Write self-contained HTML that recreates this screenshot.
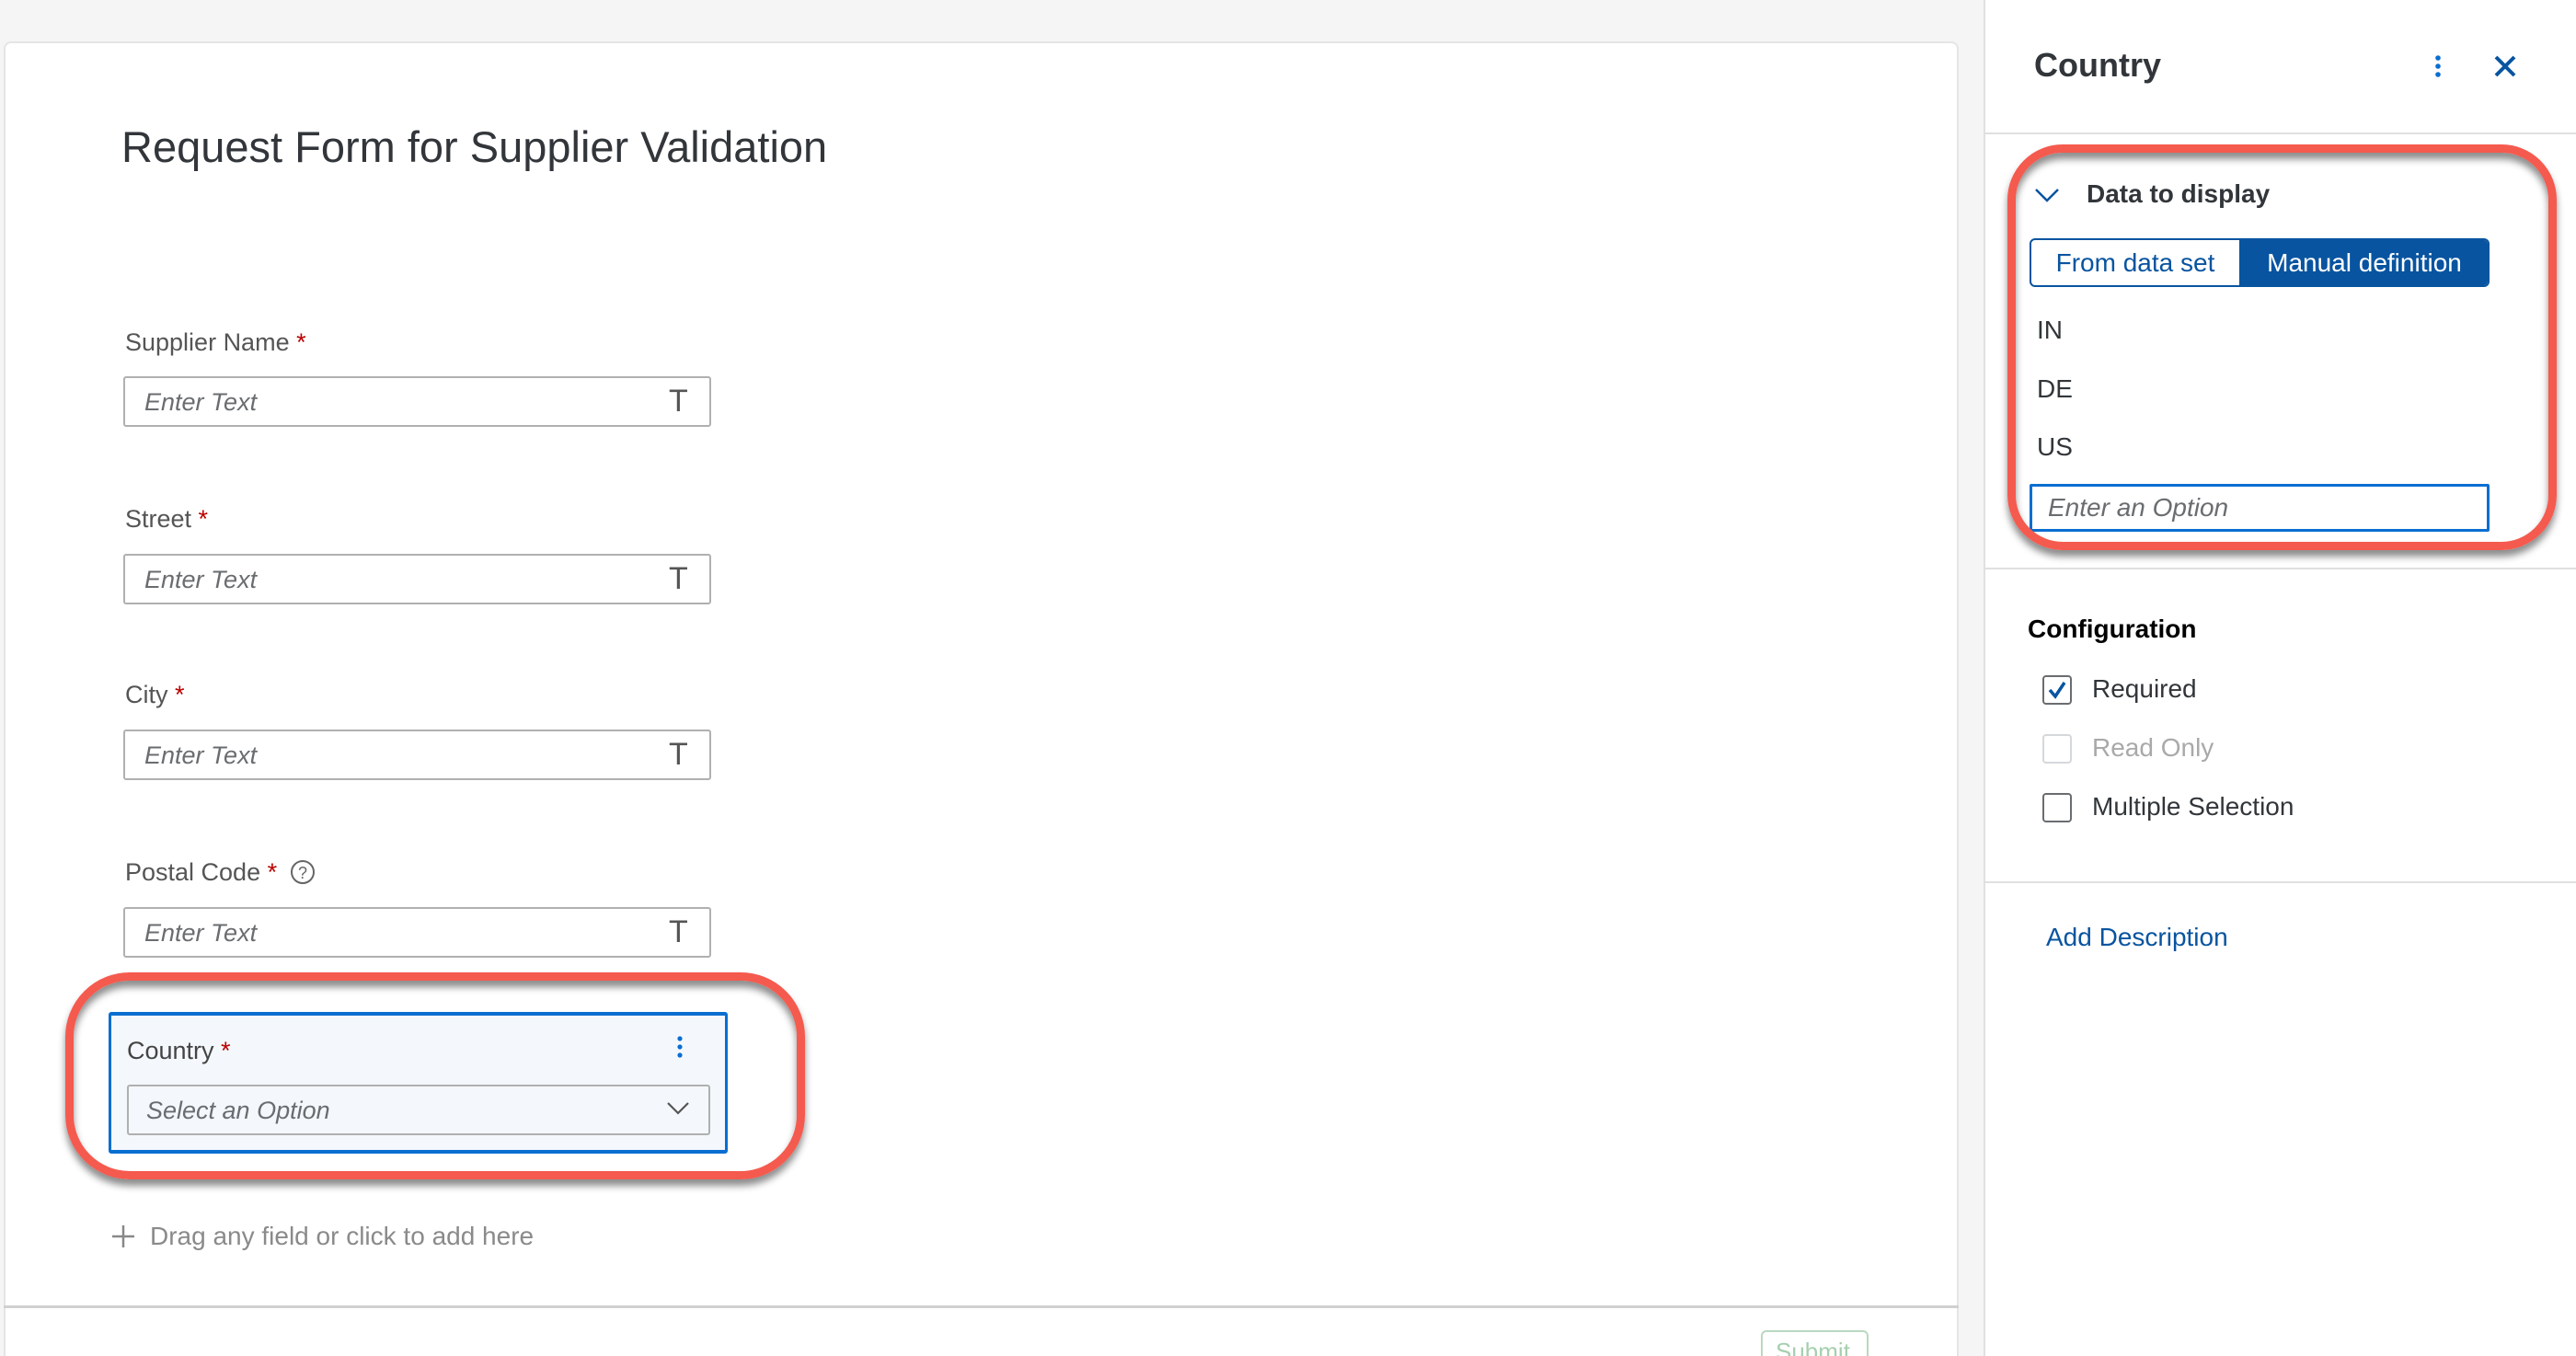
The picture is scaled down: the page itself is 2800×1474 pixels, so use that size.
<!DOCTYPE html>
<html><head><meta charset="utf-8"><style>
*{margin:0;padding:0;box-sizing:border-box}
html,body{width:2800px;height:1474px;overflow:hidden}
body{background:#f5f5f5;position:relative;font-family:"Liberation Sans",sans-serif;color:#32363a}
.a{position:absolute;white-space:nowrap}
.card{left:4px;top:45px;width:2125px;height:1500px;background:#fff;border:2px solid #e5e5e5;border-radius:8px}
.lbl{font-size:27px;color:#555;line-height:32px}
.req{color:#b00;}
.inp{width:639px;height:55px;border:2px solid #b0b0b0;border-radius:3px;background:#fff}
.ph{font-size:27px;font-style:italic;color:#6a6d70;line-height:32px}
.T{font-size:34px;color:#555;line-height:34px}
.panel{left:2156px;top:0;width:644px;height:1500px;background:#fff;border-left:2px solid #e0e0e0}
.hr{height:2px;background:#e0e0e0}
.t28{font-size:28px;line-height:32px}
</style></head><body>
<div class="a card"></div>
<div class="a" style="left:4px;top:1419px;width:2125px;height:3px;background:#d0d0d0"></div>
<div class="a" style="left:1914px;top:1446px;width:117px;height:40px;border:2px solid #b9d8c0;border-radius:6px;color:#a6cfae;font-size:26px;padding:6px 0 0 14px">Submit</div>

<div class="a" style="left:132px;top:132px;font-size:47px;color:#32363a;line-height:56px">Request Form for Supplier Validation</div>

<div class="a lbl" style="left:136px;top:356px">Supplier Name <span class="req">*</span></div>
<div class="a inp" style="left:134px;top:409px"></div>
<div class="a ph" style="left:157px;top:421px">Enter Text</div>
<div class="a T" style="left:727px;top:419px">T</div>

<div class="a lbl" style="left:136px;top:548px">Street <span class="req">*</span></div>
<div class="a inp" style="left:134px;top:602px"></div>
<div class="a ph" style="left:157px;top:614px">Enter Text</div>
<div class="a T" style="left:727px;top:612px">T</div>

<div class="a lbl" style="left:136px;top:739px">City <span class="req">*</span></div>
<div class="a inp" style="left:134px;top:793px"></div>
<div class="a ph" style="left:157px;top:805px">Enter Text</div>
<div class="a T" style="left:727px;top:803px">T</div>

<div class="a lbl" style="left:136px;top:932px">Postal Code <span class="req">*</span></div>
<svg class="a" style="left:314px;top:933px" width="30" height="30"><circle cx="15" cy="15" r="12" fill="none" stroke="#666" stroke-width="2"/><text x="15" y="22" font-size="18" text-anchor="middle" fill="#666" font-family="Liberation Sans">?</text></svg>
<div class="a inp" style="left:134px;top:986px"></div>
<div class="a ph" style="left:157px;top:998px">Enter Text</div>
<div class="a T" style="left:727px;top:996px">T</div>

<div class="a" style="left:118px;top:1100px;width:673px;height:154px;background:#f4f8fc;border:3px solid #0a6ed1;border-top-width:4px;border-bottom-width:4px;border-radius:3px"></div>
<div class="a lbl" style="left:138px;top:1126px;color:#444">Country <span class="req">*</span></div>
<svg class="a" style="left:732px;top:1124px" width="14" height="30"><circle cx="7" cy="5" r="2.6" fill="#0a6ed1"/><circle cx="7" cy="14" r="2.6" fill="#0a6ed1"/><circle cx="7" cy="23" r="2.6" fill="#0a6ed1"/></svg>
<div class="a" style="left:138px;top:1179px;width:634px;height:55px;border:2px solid #b0b0b0;border-radius:3px;background:#f4f8fc"></div>
<div class="a ph" style="left:159px;top:1191px">Select an Option</div>
<svg class="a" style="left:724px;top:1196px" width="26" height="18"><path d="M2 3 L13 14 L24 3" fill="none" stroke="#555" stroke-width="2.2"/></svg>
<div class="a" style="left:71px;top:1057px;width:804px;height:225px;border:9px solid #f55a4e;border-radius:70px;box-shadow:0 7px 8px rgba(0,0,0,.45),inset 0 7px 8px rgba(0,0,0,.45)"></div>

<svg class="a" style="left:120px;top:1330px" width="28" height="28"><path d="M14 2V26M2 14H26" stroke="#888" stroke-width="2.5"/></svg>
<div class="a lbl" style="left:163px;top:1328px;color:#8a8a8a;font-size:28px">Drag any field or click to add here</div>

<div class="a panel"></div>
<div class="a" style="left:2211px;top:50px;font-size:36px;font-weight:bold;color:#32363a;line-height:42px">Country</div>
<svg class="a" style="left:2643px;top:58px" width="14" height="30"><circle cx="7" cy="5" r="2.8" fill="#0a6ed1"/><circle cx="7" cy="14" r="2.8" fill="#0a6ed1"/><circle cx="7" cy="23" r="2.8" fill="#0a6ed1"/></svg>
<svg class="a" style="left:2710px;top:59px" width="26" height="26"><path d="M3 3L23 23M23 3L3 23" stroke="#0854a0" stroke-width="4"/></svg>
<div class="a hr" style="left:2158px;top:144px;width:642px"></div>

<svg class="a" style="left:2210px;top:202px" width="30" height="20"><path d="M3 4L15 16L27 4" fill="none" stroke="#0854a0" stroke-width="2.5"/></svg>
<div class="a t28" style="left:2268px;top:195px;font-weight:bold">Data to display</div>
<div class="a" style="left:2206px;top:259px;width:500px;height:53px;border:2px solid #0854a0;border-radius:6px;overflow:hidden;background:#fff">
 <div class="a t28" style="left:0;top:0;width:226px;height:49px;color:#0854a0;text-align:center;line-height:49px">From data set</div>
 <div class="a t28" style="left:226px;top:0;width:272px;height:49px;background:#0854a0;color:#fff;text-align:center;line-height:49px">Manual definition</div>
</div>
<div class="a t28" style="left:2214px;top:343px">IN</div>
<div class="a t28" style="left:2214px;top:407px">DE</div>
<div class="a t28" style="left:2214px;top:470px">US</div>
<div class="a" style="left:2206px;top:526px;width:500px;height:52px;border:3px solid #0a6ed1;border-radius:2px;background:#fff"></div>
<div class="a ph" style="left:2226px;top:536px;font-size:28px">Enter an Option</div>
<div class="a" style="left:2182px;top:157px;width:597px;height:441px;border:9px solid #f55a4e;border-radius:60px;box-shadow:0 7px 8px rgba(0,0,0,.45),inset 0 7px 8px rgba(0,0,0,.45)"></div>
<div class="a hr" style="left:2158px;top:617px;width:642px"></div>

<div class="a t28" style="left:2204px;top:668px;font-weight:bold;color:#000">Configuration</div>
<div class="a" style="left:2220px;top:734px;width:32px;height:32px;border:2px solid #6a6d70;border-radius:4px"></div>
<svg class="a" style="left:2222px;top:736px" width="28" height="28"><path d="M6 14L12 21L22 6" fill="none" stroke="#0854a0" stroke-width="3.5"/></svg>
<div class="a t28" style="left:2274px;top:733px">Required</div>
<div class="a" style="left:2220px;top:798px;width:32px;height:32px;border:2px solid #d5d8db;border-radius:4px"></div>
<div class="a t28" style="left:2274px;top:797px;color:#a9a9a9">Read Only</div>
<div class="a" style="left:2220px;top:862px;width:32px;height:32px;border:2px solid #6a6d70;border-radius:4px"></div>
<div class="a t28" style="left:2274px;top:861px">Multiple Selection</div>
<div class="a hr" style="left:2158px;top:958px;width:642px"></div>
<div class="a t28" style="left:2224px;top:1003px;color:#0854a0">Add Description</div>
</body></html>
